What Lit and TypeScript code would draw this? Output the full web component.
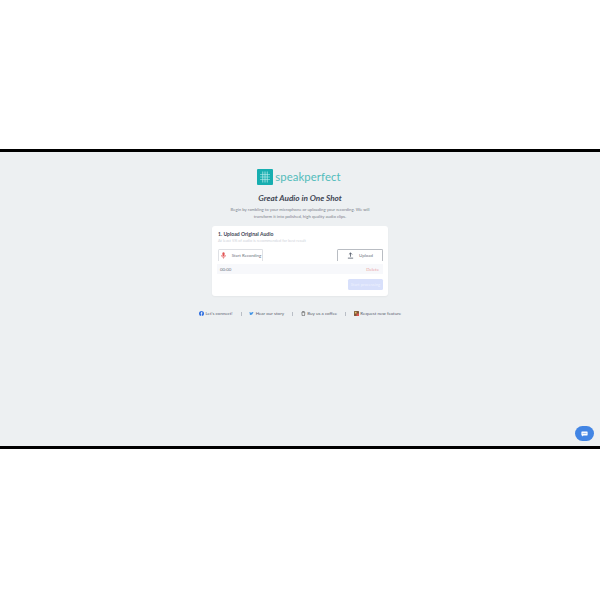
import { LitElement, html, css } from "lit";
import { customElement } from "lit/decorators.js";

@customElement("app-root")
export class AppRoot extends LitElement {
  static styles = css`
    :host { display: block; width: 600px; height: 600px; background: #fff; font-family: "Lato", "Liberation Sans", sans-serif; padding-top: 149px; box-sizing: border-box; }
    .frame { height: 300px; box-sizing: border-box; border-top: 3px solid #000; border-bottom: 3px solid #000; background: #edf0f2; position: relative; display: flex; flex-direction: column; align-items: center; padding-top: 17px; }
    .logo { display: flex; align-items: center; gap: 2px; height: 16px; margin-right: 2px; }
    .mark { width: 16px; height: 16px; display: block; }
    .word { font-size: 11.3px; color: #52bcbb; letter-spacing: 0.1px; line-height: 16px; }
    h1 { margin: 8px 0 0; font-size: 8.2px; line-height: 10px; font-style: italic; font-weight: 700; color: #3f4654; }
    .sub { margin: 4px 0 0; width: 144px; text-align: center; font-size: 4.25px; line-height: 6.5px; color: #7b818c; }
    .card { margin-top: 6px; width: 176px; height: 70px; box-sizing: border-box; background: #fff; border-radius: 3px; padding: 5px 5px 5px 6px; box-shadow: 0 1px 2px rgba(0,0,0,.04); display: flex; flex-direction: column; }
    .title { font-size: 5.1px; line-height: 6px; font-weight: 700; color: #414856; }
    .hint { margin-top: 1px; font-size: 3.9px; line-height: 6px; color: #cfd3da; }
    .tabs { margin-top: 5px; display: flex; justify-content: space-between; }
    .tab { height: 12px; box-sizing: border-box; border: 0.6px solid #dfe1e5; border-bottom: none; border-radius: 1.5px 1.5px 0 0; display: flex; align-items: center; justify-content: center; gap: 5px; font-size: 4.4px; color: #6b7280; background: #fff; }
    .tab.rec { width: 45px; }
    .tab.up { width: 46px; border-color: #b9bdc3; }
    .tab svg { width: 7px; height: 7px; display: block; }
    .row { margin: 3px 0 0 -1px; height: 10px; background: #f7f8fb; display: flex; align-items: center; justify-content: space-between; padding: 0 4px 0 3px; font-size: 4.4px; color: #6b7280; }
    .del { color: #e9a0a0; }
    .go { margin-top: 5px; align-self: flex-end; width: 35px; height: 11px; border-radius: 1.5px; background: #d8e0fb; color: #eef1fe; font-size: 4.2px; display: flex; align-items: center; justify-content: center; }
    .links { margin-top: 14.5px; display: flex; align-items: center; font-size: 4.5px; line-height: 6px; color: #5b6370; }
    .link { display: flex; align-items: center; gap: 1.5px; }
    .link svg { width: 5px; height: 5px; display: block; }
    .sep { width: 0.6px; height: 4px; background: #b9bec6; margin: 0 8px; }
    .chat { position: absolute; right: 6px; bottom: 5px; width: 19px; height: 15px; border-radius: 8px; background: #4285e4; display: flex; align-items: center; justify-content: center; }
    .chat svg { width: 7px; height: 6px; display: block; }
  `;

  render() {
    return html`
      <div class="frame">
        <div class="logo">
          <svg class="mark" viewBox="0 0 16 16">
            <rect width="16" height="16" rx="1" fill="#17aeb0"/>
            <path d="M5.500 2.500v11M7.200 2.500v11M8.800 2.500v11M10.500 2.500v11M3 5.500h10M3 8h10M3 10.500h10" stroke="#bfeeee" stroke-width=".55" fill="none"/>
          </svg>
          <span class="word">speakperfect</span>
        </div>
        <h1>Great Audio in One Shot</h1>
        <p class="sub">Begin by rambling to your microphone or uploading your recording. We will transform it into polished, high quality audio clips.</p>
        <div class="card">
          <div class="title">1. Upload Original Audio</div>
          <div class="hint">At least 5% of audio is recommended for best result</div>
          <div class="tabs">
            <div class="tab rec">
              <svg viewBox="0 0 8 8"><rect x="2.800" y=".3" width="2.400" height="4.800" rx="1.200" fill="#e25555"/><path d="M1.600 3.600a2.400 2.400 0 0 0 4.800 0M4 6v1.600" stroke="#e25555" stroke-width=".7" fill="none"/></svg>
              <span>Start Recording</span>
            </div>
            <div class="tab up">
              <svg viewBox="0 0 8 8"><path d="M4 5.400V1M2.200 2.800 4 1l1.800 1.800M1 7h6" stroke="#374151" stroke-width=".8" fill="none"/></svg>
              <span>Upload</span>
            </div>
          </div>
          <div class="row"><span>00:00</span><span class="del">Delete</span></div>
          <div class="go">Start processing</div>
        </div>
        <div class="links">
          <div class="link"><svg viewBox="0 0 6 6"><circle cx="3" cy="3" r="3" fill="#2f6fe0"/><path d="M3.300 6V3.400h.8V2.600h-.8V2.100q0-.4.5-.4h.3V1h-.6q-1 0-1 1v.6h-.6v.8h.6V6z" fill="#fff"/></svg><span>Let's connect!</span></div>
          <div class="sep"></div>
          <div class="link"><svg viewBox="0 0 6 6"><path d="M.4 4.600Q3.800 5.600 5 2.200l.7-.6-.7.1.4-.6-.7.3Q3.600.9 3 2.200 1.600 2 .6 1.100q-.3 1 .5 1.600l-.5-.1q.1.7.8 1l-.5 0q.3.6 1 .6-.7.5-1.500.4z" fill="#3f93e6"/></svg><span>Hear our story</span></div>
          <div class="sep"></div>
          <div class="link"><svg viewBox="0 0 6 6"><path d="M1 1.600h3.600l-.4 4H1.400zM1.400.6h2.800" stroke="#333" stroke-width=".6" fill="none"/></svg><span>Buy us a coffee</span></div>
          <div class="sep"></div>
          <div class="link"><svg viewBox="0 0 6 6"><rect width="6" height="6" rx=".6" fill="#7d5a3c"/><rect x="3" y="3" width="3" height="3" fill="#d9534f"/><rect x="1" y="1" width="2" height="2" fill="#e8c36a"/></svg><span>Request new feature</span></div>
        </div>
        <div class="chat"><svg viewBox="0 0 7 6"><path d="M.8.5h5.400q.4 0 .4.4v3.200q0 .4-.4.4H2.500L1.200 5.600V4.500H.8q-.4 0-.4-.4V.9q0-.4.4-.4z" fill="#fff"/><path d="M1.500 2.400h4" stroke="#4285e4" stroke-width=".5"/></svg></div>
      </div>
    `;
  }
}
